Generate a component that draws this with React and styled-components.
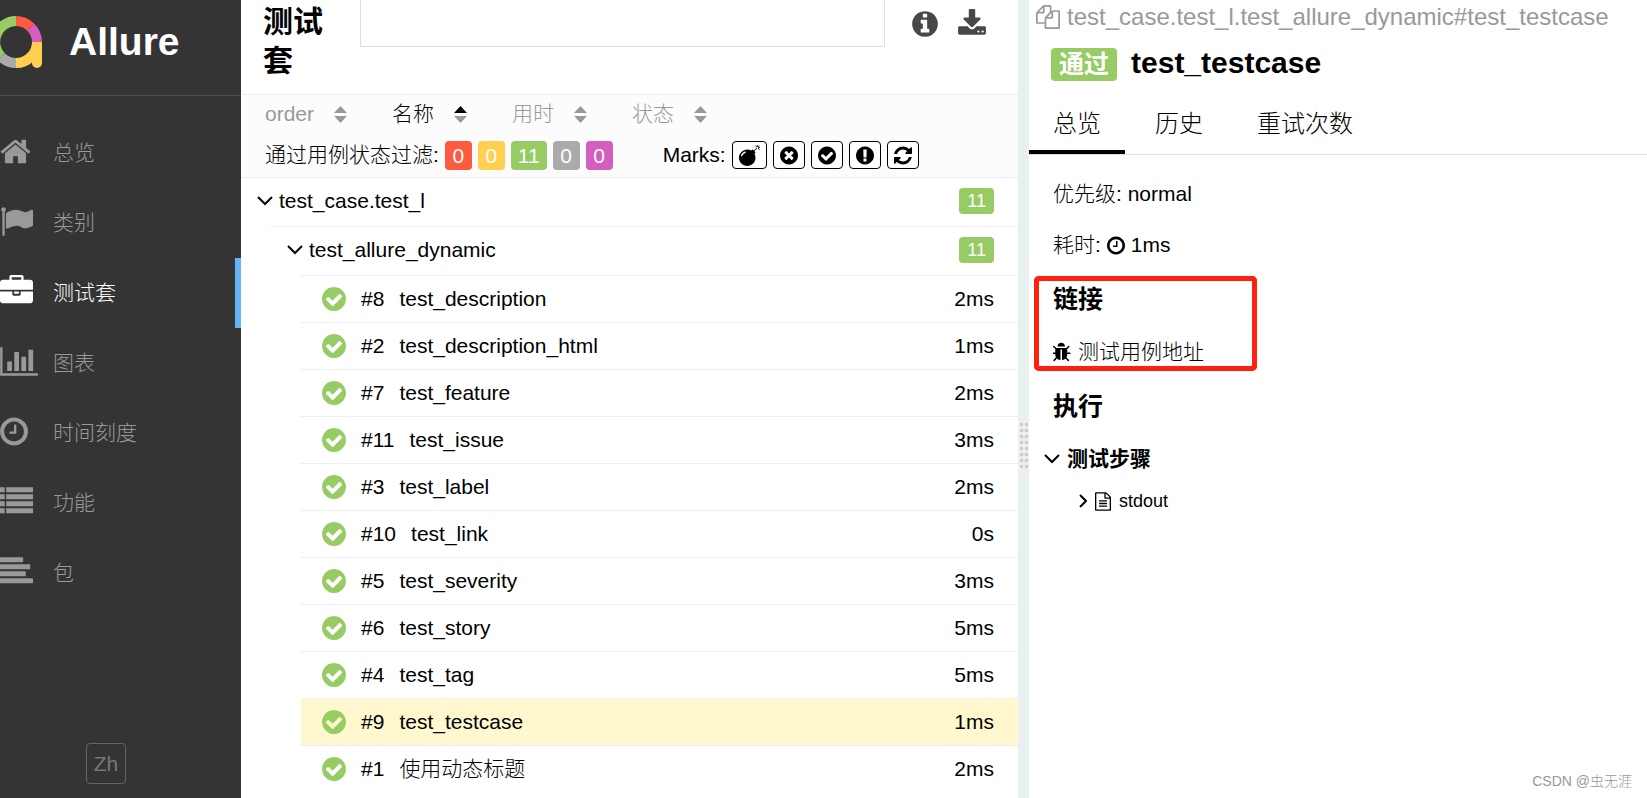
import { useState } from "react";
import styled, { createGlobalStyle } from "styled-components";

const CIRCLE =
  "M1664 896q0 209-103 385.5t-279.5 279.5-385.5 103-385.5-103-279.5-279.5-103-385.5 103-385.5 279.5-279.5 385.5-103 385.5 103 279.5 279.5 103 385.5z";

// [left, width, path] on a 1792 unit grid
const icons = {
  home: [64, 1664, "M1472 992v480q0 26-19 45t-45 19h-384v-384h-256v384h-384q-26 0-45-19t-19-45v-480q0-1 .5-3t.5-3l575-474 575 474q1 2 1 6zm223-69l-62 74q-8 9-21 11h-3q-13 0-21-7l-692-577-692 577q-12 8-24 7-13-2-21-11l-62-74q-8-10-7-23.5t11-21.5l719-599q32-26 76-26t76 26l244 204v-195q0-14 9-23t23-9h192q14 0 23 9t9 23v408l219 182q10 8 11 21.5t-7 23.5z"],
  flag: [0, 1792, "M320 256q0 72-64 110v1266q0 13-9.5 22.5t-22.5 9.5h-64q-13 0-22.5-9.5t-9.5-22.5v-1266q-64-38-64-110 0-53 37.5-90.5t90.5-37.5 90.5 37.5 37.5 90.5zm1472 64v763q0 25-12.5 38.5t-39.5 27.5q-215 116-369 116-61 0-123.5-22t-108.5-48-115.5-48-142.5-22q-192 0-464 146-17 9-33 9-26 0-45-19t-19-45v-742q0-32 31-55 21-14 79-43 236-120 421-120 107 0 200 29t219 88q38 19 88 19 54 0 117.5-21t110-47 88-47 54.5-21q26 0 45 19t19 45z"],
  briefcase: [0, 1792, "M640 256h512v-128h-512v128zm1152 640v480q0 66-47 113t-113 47h-1472q-66 0-113-47t-47-113v-480h672v160q0 26 19 45t45 19h320q26 0 45-19t19-45v-160h672zm-768 0v128h-256v-128h256zm768-480v384h-1792v-384q0-66 47-113t113-47h352v-160q0-40 28-68t68-28h576q40 0 68 28t28 68v160h352q66 0 113 47t47 113z"],
  chart: [0, 2048, "M640 896v512h-256v-512h256zm384-512v1024h-256v-1024h256zm1024 1152v128h-2048v-1536h128v1408h1920zm-640-896v768h-256v-768h256zm384-384v1152h-256v-1152h256z"],
  clock: [128, 1536, "M1024 544v448q0 14-9 23t-23 9h-320q-14 0-23-9t-9-23v-64q0-14 9-23t23-9h224v-352q0-14 9-23t23-9h64q14 0 23 9t9 23zm416 352q0-148-73-273t-198-198-273-73-273 73-198 198-73 273 73 273 198 198 273 73 273-73 198-198 73-273zm224 0q0 209-103 385.5t-279.5 279.5-385.5 103-385.5-103-279.5-279.5-103-385.5 103-385.5 279.5-279.5 385.5-103 385.5 103 279.5 279.5 103 385.5z"],
  list: [0, 1792, "M0 128h256v272h-256zM336 128h1456v272h-1456zM0 508h256v272h-256zM336 508h1456v272h-1456zM0 888h256v272h-256zM336 888h1456v272h-1456zM0 1268h256v272h-256zM336 1268h1456v272h-1456z"],
  align: [0, 1792, "M0 128h1216q40 0 40 40v192q0 40-40 40h-1216zM0 508h1600q40 0 40 40v192q0 40-40 40h-1600zM0 888h1360q40 0 40 40v192q0 40-40 40h-1360zM0 1268h1752q40 0 40 40v192q0 40-40 40h-1752z"],
  check: [128, 1536, "M1412 734q0-28-18-46l-91-90q-19-19-45-19t-45 19l-408 407-226-226q-19-19-45-19t-45 19l-91 90q-18 18-18 46 0 27 18 45l362 362q19 19 45 19 27 0 46-19l543-543q18-18 18-45z" + CIRCLE],
  times: [128, 1536, "M1277 1122q0-26-19-45l-181-181 181-181q19-19 19-45 0-27-19-46l-90-90q-19-18-46-18-26 0-45 18l-181 181-181-181q-19-18-45-18-27 0-46 18l-90 90q-19 19-19 46 0 26 19 45l181 181-181 181q-19 19-19 45 0 27 19 46l90 90q19 18 46 18 26 0 45-18l181-181 181 181q19 18 45 18 27 0 46-18l90-90q19-19 19-46z" + CIRCLE],
  exclamation: [128, 1536, "M1024 1375v-190q0-14-9-23.5t-22-9.5h-192q-13 0-23 10t-10 23v190q0 13 10 23t23 10h192q13 0 22-9.5t9-23.5zm-2-344l18-621q0-12-10-18-10-8-24-8h-220q-14 0-24 8-10 6-10 18l17 621q0 10 10 17.5t24 7.5h185q14 0 23.500-7.500t10.500-17.500z" + CIRCLE],
  info: [128, 1536, "M1152 1376v-160q0-14-9-23t-23-9h-96v-512q0-14-9-23t-23-9h-320q-14 0-23 9t-9 23v160q0 14 9 23t23 9h96v320h-96q-14 0-23 9t-9 23v160q0 14 9 23t23 9h448q14 0 23-9t9-23zm-128-896v-160q0-14-9-23t-23-9h-192q-14 0-23 9t-9 23v160q0 14 9 23t23 9h192q14 0 23-9t9-23z" + CIRCLE],
  refresh: [128, 1536, "M1639 1056q0 5-1 7-64 268-268 434.5t-478 166.5q-146 0-282.5-55t-243.5-157l-129 129q-19 19-45 19t-45-19-19-45v-448q0-26 19-45t45-19h448q26 0 45 19t19 45-19 45l-137 137q71 66 161 102t187 36q134 0 250-65t186-179q11-17 53-117 8-23 30-23h192q13 0 22.5 9.5t9.5 22.5zm25-800v448q0 26-19 45t-45 19h-448q-26 0-45-19t-19-45 19-45l138-138q-148-137-349-137-134 0-250 65t-186 179q-11 17-53 117-8 23-30 23h-199q-13 0-22.5-9.5t-9.5-22.5v-7q65-268 270-434.5t480-166.5q146 0 284 55.5t245 156.5l130-129q19-19 45-19t45 19 19 45z"],
  bomb: [0, 1792, "M571 589q-10-25-34-35t-49 0q-108 44-191 127t-127 191q-10 25 0 49t35 34q13 5 24 5 42 0 60-40 34-84 98.5-148.5t148.5-98.5q25-11 35-35t0-49zm942-356l46 46-244 243 68 68q19 19 19 45.5t-19 45.5l-64 64q89 161 89 343 0 143-55.5 273.5t-150 225-225 150-273.5 55.5-273.5-55.5-225-150-150-225-55.5-273.5 55.5-273.5 150-225 225-150 273.5-55.5q182 0 343 89l64-64q19-19 45.5-19t45.5 19l68 68zm8-56q-10 10-22 10-13 0-23-10l-91-90q-9-10-9-23t9-23q10-9 23-9t23 9l90 91q10 9 10 22.5t-10 22.5zm230 230q-11 9-23 9-13 0-23-9l-90-91q-10-9-10-22.5t10-22.5q9-10 22.5-10t22.500 10l91 90q9 10 9 23t-9 23zm41-183q0 14-9 23t-23 9h-96q-14 0-23-9t-9-23 9-23 23-9h96q14 0 23 9t9 23zm-192-192v96q0 14-9 23t-23 9-23-9-9-23v-96q0-14 9-23t23-9 23 9 9 23zm151 55l-91 90q-10 10-22 10-13 0-23-10-10-9-10-22.5t10-22.5l90-91q10-9 23-9t23 9q9 10 9 23t-9 23z"],
  download: [64, 1664, "M1344 1344q0-26-19-45t-45-19-45 19-19 45 19 45 45 19 45-19 19-45zm256 0q0-26-19-45t-45-19-45 19-19 45 19 45 45 19 45-19 19-45zm128-224v320q0 40-28 68t-68 28h-1472q-40 0-68-28t-28-68v-320q0-40 28-68t68-28h465l135 136q58 56 136 56t136-56l136-136h464q40 0 68 28t28 68zm-325-569q17 41-14 70l-448 448q-18 19-45 19t-45-19l-448-448q-31-29-14-70 17-39 59-39h256v-448q0-26 19-45t45-19h256q26 0 45 19t19 45v448h256q42 0 59 39z"],
  copy: [0, 1792, "M1696 384q40 0 68 28t28 68v1216q0 40-28 68t-68 28h-960q-40 0-68-28t-28-68v-288h-544q-40 0-68-28t-28-68v-672q0-40 20-88t48-76l408-408q28-28 76-48t88-20h416q40 0 68 28t28 68v328q68-40 128-40h416zm-544 213l-299 299h299v-299zm-640-384l-299 299h299v-299zm196 647l316-316v-416h-384v416q0 40-28 68t-68 28h-416v640h512v-256q0-40 20-88t48-76zm956 804v-1152h-384v416q0 40-28 68t-68 28h-416v640h896z"],
  file: [128, 1536, "M1596 380q28 28 48 76t20 88v1152q0 40-28 68t-68 28h-1344q-40 0-68-28t-28-68v-1600q0-40 28-68t68-28h896q40 0 88 20t76 48zm-444-244v376h376q-10-29-22-41l-313-313q-12-12-41-22zm384 1528v-1024h-416q-40 0-68-28t-28-68v-416h-768v1536h1280zm-1024-864q0-14 9-23t23-9h704q14 0 23 9t9 23v64q0 14-9 23t-23 9h-704q-14 0-23-9t-9-23v-64zm736 224q14 0 23 9t9 23v64q0 14-9 23t-23 9h-704q-14 0-23-9t-9-23v-64q0-14 9-23t23-9h704zm0 256q14 0 23 9t9 23v64q0 14-9 23t-23 9h-704q-14 0-23-9t-9-23v-64q0-14 9-23t23-9h704z"],
  bug: [128, 1536, "M1632 960q0 26-19 45t-45 19h-224q0 171-67 290l208 209q19 19 19 45t-19 45q-18 19-45 19t-45-19l-198-197q-5 5-15 13t-42 28.5-65 36.5-82 29-97 13v-896h-128v896q-51 0-101.5-13.5t-87-33-66-39-43.5-32.5l-15-14-183 207q-20 21-48 21-24 0-43-16-19-18-20.5-44.5t15.5-46.5l202-227q-58-114-58-274h-224q-26 0-45-19t-19-45 19-45 45-19h224v-294l-173-173q-19-19-19-45t19-45 45-19 45 19l173 173h844l173-173q19-19 45-19t45 19 19 45-19 45l-173 173v294h224q26 0 45 19t19 45zm-480-576h-640q0-133 93.5-226.5t226.5-93.5 226.5 93.5 93.5 226.5z"],
};

const Icon = ({ name, size }) => {
  const [left, width, d] = icons[name];
  return (
    <Svg
      width={Math.round((width / 1792) * size)}
      height={size}
      viewBox={`${left} 0 ${width} 1792`}
      fill="currentColor"
      fillRule={["check", "times", "exclamation", "info"].includes(name) ? "evenodd" : "nonzero"}
      aria-hidden="true"
    >
      <path d={d} />
    </Svg>
  );
};

const Chevron = ({ right }) =>
  right ? (
    <Svg width="8" height="14" viewBox="0 0 8 14" fill="none" stroke="currentColor" strokeWidth="2" aria-hidden="true">
      <path d="M1 1l6 6-6 6" />
    </Svg>
  ) : (
    <Svg width="16" height="10" viewBox="0 0 16 10" fill="none" stroke="currentColor" strokeWidth="2" aria-hidden="true">
      <path d="M1 1l7 7 7-7" />
    </Svg>
  );

const Logo = () => (
  <Svg width="42" height="52" viewBox="0 0 42 52" fill="none" strokeWidth="10" aria-hidden="true">
    <path d="M1.200 40.800A21 21 0 0 1 16 5" stroke="#97cc64" />
    <path d="M16 5a21 21 0 0 1 14.800 6.200" stroke="#fd5a3e" />
    <path d="M30.800 11.200A21 21 0 0 1 37 26" stroke="#d35ebe" />
    <path d="M16 47A21 21 0 0 1 1.200 40.800" stroke="#aaa" />
    <path d="M37 26a21 21 0 0 1-21 21" stroke="#ffd050" />
    <path d="M37 26v21" stroke="#ffd050" />
    <circle cx="37" cy="47" r="5" fill="#ffd050" stroke="none" />
  </Svg>
);

const menu = [
  { icon: "home", label: "总览" },
  { icon: "flag", label: "类别" },
  { icon: "briefcase", label: "测试套" },
  { icon: "chart", label: "图表" },
  { icon: "clock", label: "时间刻度" },
  { icon: "list", label: "功能" },
  { icon: "align", label: "包" },
];

const sorters = ["order", "名称", "用时", "状态"];

const statuses = [
  { name: "failed", color: "#fd5a3e", count: 0 },
  { name: "broken", color: "#ffd050", count: 0 },
  { name: "passed", color: "#97cc64", count: 11 },
  { name: "skipped", color: "#aaa", count: 0 },
  { name: "unknown", color: "#d35ebe", count: 0 },
];

const marks = ["bomb", "times", "check", "exclamation", "refresh"];

const tests = [
  { id: 8, name: "test_description", time: "2ms" },
  { id: 2, name: "test_description_html", time: "1ms" },
  { id: 7, name: "test_feature", time: "2ms" },
  { id: 11, name: "test_issue", time: "3ms" },
  { id: 3, name: "test_label", time: "2ms" },
  { id: 10, name: "test_link", time: "0s" },
  { id: 5, name: "test_severity", time: "3ms" },
  { id: 6, name: "test_story", time: "5ms" },
  { id: 4, name: "test_tag", time: "5ms" },
  { id: 9, name: "test_testcase", time: "1ms" },
  { id: 1, name: "使用动态标题", time: "2ms" },
];

const tabs = ["总览", "历史", "重试次数"];

const App = () => {
  const [selected, setSelected] = useState(9);
  const [sortBy, setSortBy] = useState("名称");
  const [tab, setTab] = useState("总览");

  return (
    <>
      <GlobalStyle />
      <Page>
        <Sidebar>
          <Brand>
            <Logo />
            Allure
          </Brand>
          <Menu>
            {menu.map(({ icon, label }) => (
              <MenuLink key={icon} href="#" $active={icon === "briefcase"}>
                <MenuIcon>
                  <Icon name={icon} size={33} />
                </MenuIcon>
                {label}
              </MenuLink>
            ))}
          </Menu>
          <LanguageButton type="button">Zh</LanguageButton>
        </Sidebar>

        <Suites>
          <SuitesHeader>
            <SuitesTitle>测试套</SuitesTitle>
            <Search type="text" aria-label="search" />
            <HeaderButton type="button" aria-label="info">
              <Icon name="info" size={30} />
            </HeaderButton>
            <HeaderButton type="button" aria-label="download">
              <Icon name="download" size={30} />
            </HeaderButton>
          </SuitesHeader>

          <Toolbar>
            <SorterRow>
              {sorters.map((sorter) => (
                <Sorter
                  key={sorter}
                  type="button"
                  $active={sorter === sortBy}
                  onClick={() => setSortBy(sorter)}
                >
                  {sorter}
                  <Svg width="13" height="17" viewBox="0 0 13 17" aria-hidden="true">
                    <path d="M6.500 0L13 7H0z" fill={sorter === sortBy ? "#000" : "#999"} />
                    <path d="M6.500 17L13 10H0z" fill="#999" />
                  </Svg>
                </Sorter>
              ))}
            </SorterRow>
            <FilterRow>
              <Filter>
                通过用例状态过滤:
                {statuses.map(({ name, color, count }) => (
                  <StatusButton key={name} type="button" aria-label={`${name} ${count}`} $color={color}>
                    {count}
                  </StatusButton>
                ))}
              </Filter>
              <Filter>
                Marks:
                {marks.map((mark) => (
                  <MarkButton key={mark} type="button" aria-label={mark}>
                    <Icon name={mark} size={21} />
                  </MarkButton>
                ))}
              </Filter>
            </FilterRow>
          </Toolbar>

          <Tree>
            <li>
              <Group type="button">
                <Chevron />
                <GroupName>test_case.test_l</GroupName>
                <Badge>11</Badge>
              </Group>
              <SubTree>
                <li>
                  <Group type="button">
                    <Chevron />
                    <GroupName>test_allure_dynamic</GroupName>
                    <Badge>11</Badge>
                  </Group>
                  <SubTree>
                    {tests.map(({ id, name, time }) => (
                      <li key={id}>
                        <Leaf href="#" $selected={id === selected} onClick={() => setSelected(id)}>
                          <LeafStatus>
                            <Icon name="check" size={28} />
                          </LeafStatus>
                          <span>#{id}</span>
                          <LeafName>{name}</LeafName>
                          <span>{time}</span>
                        </Leaf>
                      </li>
                    ))}
                  </SubTree>
                </li>
              </SubTree>
            </li>
          </Tree>
        </Suites>

        <Splitter>
          <Grip />
        </Splitter>

        <Details>
          <FullName>
            <Icon name="copy" size={24} />
            test_case.test_l.test_allure_dynamic#test_testcase
          </FullName>
          <DetailsTitle>
            <Status>通过</Status>
            test_testcase
          </DetailsTitle>
          <Tabs>
            {tabs.map((name) => (
              <Tab key={name} type="button" $active={name === tab} onClick={() => setTab(name)}>
                {name}
              </Tab>
            ))}
          </Tabs>
          <Content>
            <Line>优先级: normal</Line>
            <Line>
              耗时: <Icon name="clock" size={21} /> 1ms
            </Line>
            <Links>
              <SectionTitle>链接</SectionTitle>
              <IssueLink href="#">
                <Icon name="bug" size={21} />
                测试用例地址
              </IssueLink>
            </Links>
            <SectionTitle>执行</SectionTitle>
            <Step type="button">
              <Chevron />
              测试步骤
            </Step>
            <Attachment type="button">
              <Chevron right />
              <Icon name="file" size={19} />
              stdout
            </Attachment>
          </Content>
          <Watermark>CSDN @虫无涯</Watermark>
        </Details>
      </Page>
    </>
  );
};

export default App;

const GlobalStyle = createGlobalStyle`
  *, *::after {
    box-sizing: border-box;
  }

  body {
    margin: 0;
    background: #fff;
    color: #000;
    font-family: "Liberation Sans", "Noto Sans CJK SC", sans-serif;
    font-size: 21px;
    font-weight: 300;
    line-height: 30px;
  }

  button {
    font: inherit;
    color: inherit;
    background: none;
    border: none;
    padding: 0;
    cursor: pointer;
  }

  a {
    color: inherit;
    text-decoration: none;
  }

  ul {
    list-style: none;
    margin: 0;
    padding: 0;
  }
`;

const Svg = styled.svg`
  display: block;
  flex: none;
`;

const Page = styled.div`
  display: grid;
  grid-template-columns: 241px minmax(0, 777fr) 11px minmax(0, 618fr);
  min-height: 100vh;
`;

const Sidebar = styled.aside`
  display: flex;
  flex-direction: column;
  background: #343434;
  color: #999;
`;

const Brand = styled.div`
  display: flex;
  align-items: center;
  gap: 27px;
  height: 96px;
  padding-bottom: 12px;
  border-bottom: 1px solid #4d4d4d;
  color: #fff;
  font-size: 39px;
  font-weight: bold;
`;

const Menu = styled.nav`
  padding-top: 22px;
`;

const MenuLink = styled.a`
  display: flex;
  align-items: center;
  height: 70px;
  border-right: 6px solid ${({ $active }) => ($active ? "#64b5f6" : "transparent")};
  color: ${({ $active }) => ($active ? "#fff" : "#999")};

  :hover {
    color: #fff;
  }
`;

const MenuIcon = styled.span`
  width: 53px;
  padding-bottom: 4px;
`;

const LanguageButton = styled.button`
  width: 40px;
  height: 41px;
  margin: auto auto 14px 86px;
  border: 1px solid #666;
  border-radius: 4px;
  color: #777;
`;

const Suites = styled.main`
  display: flex;
  flex-direction: column;
`;

const SuitesHeader = styled.header`
  display: flex;
  align-items: flex-start;
  height: 94px;
  padding-right: 32px;
`;

const SuitesTitle = styled.h1`
  width: 97px;
  margin: 0 0 0 22px;
  padding: 2px 24px 0 0;
  font-size: 30px;
  line-height: 39px;
`;

const Search = styled.input`
  flex: 1;
  min-width: 0;
  height: 47px;
  padding: 0 12px;
  border: 1px solid #e0e0e0;
  border-top: none;
  font: inherit;
`;

const HeaderButton = styled.button`
  margin: 9px 0 0 20px;
  color: #484848;

  ${Search} + & {
    margin-left: 27px;
  }
`;

const Toolbar = styled.section`
  padding: 0 24px;
  border: 1px solid #eceff1;
  border-width: 1px 0;
  background: #fcfcfc;
`;

const SorterRow = styled.div`
  display: flex;
  align-items: center;
  gap: 45px;
  height: 38px;
`;

const Sorter = styled.button`
  display: flex;
  align-items: center;
  gap: 20px;
  color: ${({ $active }) => ($active ? "#000" : "#999")};
`;

const FilterRow = styled.div`
  display: flex;
  align-items: center;
  gap: 50px;
  height: 44px;
`;

const Filter = styled.div`
  display: flex;
  align-items: center;
  gap: 6px;
`;

const StatusButton = styled.button`
  min-width: 27px;
  padding: 0 7px;
  border-radius: 4px;
  background: ${({ $color }) => $color};
  color: #fff;
  line-height: 29px;
`;

const MarkButton = styled.button`
  display: flex;
  align-items: center;
  height: 28px;
  padding: 0 6px;
  border: 1px solid #000;
  border-radius: 4px;
  background: #fff;
`;

const Tree = styled.ul`
  flex: 1;
`;

const SubTree = styled.ul`
  margin-left: 30px;

  > li {
    border-top: 1px solid #eceff1;
  }
`;

const Group = styled.button`
  display: flex;
  align-items: center;
  gap: 6px;
  width: 100%;
  height: 48px;
  padding: 0 24px 3px 16px;
  text-align: left;
`;

const GroupName = styled.span`
  flex: 1;
`;

const Badge = styled.span`
  padding: 0 8px;
  border-radius: 4px;
  background: #97cc64;
  color: #fff;
  font-size: 18px;
  line-height: 26px;
`;

const Leaf = styled.a`
  display: flex;
  align-items: center;
  gap: 15px;
  height: 46px;
  padding: 0 24px 0 21px;
  background: ${({ $selected }) => ($selected ? "#fff8ce" : "none")};
`;

const LeafStatus = styled.span`
  color: #97cc64;
`;

const LeafName = styled.span`
  flex: 1;
`;

const Splitter = styled.div`
  display: flex;
  align-items: center;
  justify-content: center;
  padding-top: 93px;
  background: #eaeff2;
`;

const Grip = styled.div`
  width: 8px;
  height: 45px;
  background: repeating-linear-gradient(transparent 0 3px, #eaeff2 3px 6px),
    repeating-linear-gradient(90deg, #ccc 0 3px, #eaeff2 3px 5px);
`;

const Details = styled.section`
  position: relative;
`;

const FullName = styled.div`
  display: flex;
  align-items: center;
  gap: 7px;
  height: 34px;
  padding-left: 7px;
  color: #999;
  font-size: 24px;
`;

const DetailsTitle = styled.h2`
  display: flex;
  align-items: flex-start;
  gap: 14px;
  margin: 0;
  padding: 14px 22px 0;
  font-size: 30px;
  line-height: 29px;
`;

const Status = styled.span`
  padding: 0 8px;
  border-radius: 4px;
  background: #97cc64;
  color: #fff;
  font-size: 25px;
  line-height: 33px;
`;

const Tabs = styled.div`
  display: flex;
  gap: 6px;
  margin-top: 13px;
  border-bottom: 1px solid #e0e0e0;
`;

const Tab = styled.button`
  height: 60px;
  padding: 4px 24px 0;
  border-bottom: 4px solid ${({ $active }) => ($active ? "#000" : "transparent")};
  font-size: 24px;
`;

const Content = styled.div`
  padding: 24px;
`;

const Line = styled.div`
  display: flex;
  align-items: center;
  gap: 6px;
  margin-bottom: 21px;
`;

const SectionTitle = styled.h3`
  margin: 0 0 23px;
  font-size: 25px;
`;

const Links = styled.section`
  position: relative;
  margin: 24px 0;

  ::after {
    content: "";
    position: absolute;
    inset: -8px auto -4px -19px;
    width: 223px;
    border: 5px solid #ff2010;
    border-radius: 5px;
    pointer-events: none;
  }
`;

const IssueLink = styled.a`
  display: flex;
  align-items: center;
  gap: 7px;
`;

const Step = styled.button`
  display: flex;
  align-items: center;
  gap: 7px;
  margin-left: -9px;
  font-weight: bold;
`;

const Attachment = styled.button`
  display: flex;
  align-items: center;
  gap: 8px;
  margin: 12px 0 0 26px;
  font-size: 18px;
`;

const Watermark = styled.div`
  position: absolute;
  right: 15px;
  bottom: 7px;
  color: #999;
  font-size: 14px;
  line-height: 20px;
`;
